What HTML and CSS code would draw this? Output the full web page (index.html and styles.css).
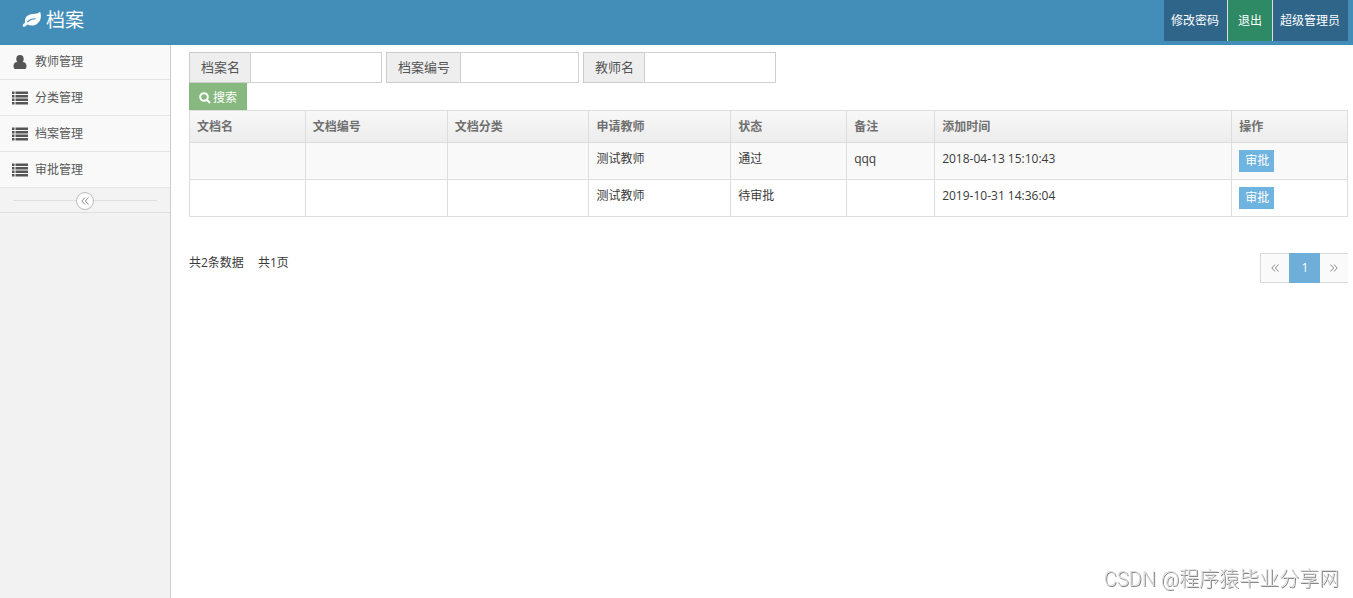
FILE: index.html
```html
<!DOCTYPE html>
<html lang="zh-CN">
<head>
<meta charset="utf-8">
<title>档案</title>
<link rel="stylesheet" href="styles.css">
</head>
<body>
<header class="navbar">
  <a class="brand" href="#">
    <svg class="brand-icon" viewBox="0 0 20 18" aria-hidden="true"><path fill="#fff" fill-rule="evenodd" d="M18.300 1.200C19.500 5 19 9.300 16 12 13 14.900 9 15.200 5.600 13.600 4.200 14.300 3.600 15.800 2.200 15.800 1.200 15.800.5 15 .7 14.200.9 13.200 2.500 12.300 3.100 11.400 2.300 8 4.300 4.800 8 3.600 11.500 2.500 15 3.600 16.900 1.600 17.500.9 18 .600 18.300 1.200ZM6 11.200C8.400 9.200 10.300 8.300 13.300 8.200 14.100 8.200 14.100 7.200 13.300 7.200 9.800 7.300 7.600 8.300 5.200 10.400 4.700 10.900 5.400 11.700 6 11.200Z"/></svg>
    <span>档案</span>
  </a>
  <nav class="user-nav">
    <a class="user-link" href="#">修改密码</a>
    <a class="user-link user-link-exit" href="#">退出</a>
    <a class="user-link" href="#">超级管理员</a>
  </nav>
</header>
<div class="container">
  <aside class="sidebar">
    <nav class="menu">
      <a class="menu-item" href="#"><svg class="menu-icon" viewBox="0 0 16 14" aria-hidden="true"><path d="M8 0a3.700 3.900 0 0 1 3.700 3.900c0 1.300-.4 2.400-1.100 3.100C13.400 7 14.500 8.700 14.500 11.400 14.500 13.100 13.500 14 12.200 14H3.800C2.500 14 1.500 13.100 1.500 11.400 1.500 8.700 2.600 7 5.400 7 4.700 6.300 4.300 5.200 4.300 3.900A3.700 3.900 0 0 1 8 0Z"/></svg>教师管理</a>
      <a class="menu-item" href="#"><svg class="menu-icon" viewBox="0 0 16 14" aria-hidden="true"><path d="M0 .5h2.500V3H0zM3.500.5H16V3H3.500zM0 4h2.500v2.500H0zM3.500 4H16v2.500H3.500zM0 7.500h2.500V10H0zM3.500 7.500H16V10H3.500zM0 11h2.500v2.500H0zM3.500 11H16v2.500H3.500z"/></svg>分类管理</a>
      <a class="menu-item" href="#"><svg class="menu-icon" viewBox="0 0 16 14" aria-hidden="true"><path d="M0 .5h2.500V3H0zM3.500.5H16V3H3.500zM0 4h2.500v2.500H0zM3.500 4H16v2.500H3.500zM0 7.500h2.500V10H0zM3.500 7.500H16V10H3.500zM0 11h2.500v2.500H0zM3.500 11H16v2.500H3.500z"/></svg>档案管理</a>
      <a class="menu-item" href="#"><svg class="menu-icon" viewBox="0 0 16 14" aria-hidden="true"><path d="M0 .5h2.500V3H0zM3.500.5H16V3H3.500zM0 4h2.500v2.500H0zM3.500 4H16v2.500H3.500zM0 7.500h2.500V10H0zM3.500 7.500H16V10H3.500zM0 11h2.500v2.500H0zM3.500 11H16v2.500H3.500z"/></svg>审批管理</a>
    </nav>
    <div class="collapse">
      <button class="collapse-button" type="button" aria-label="收起菜单"><svg class="collapse-icon" viewBox="0 0 8 8" aria-hidden="true"><path d="M4 .5.800 4 4 7.500M7.500.5 4.300 4 7.500 7.500"/></svg></button>
    </div>
  </aside>
  <main class="content">
    <form class="search">
      <div class="fields">
        <div class="field"><label class="field-label" for="doc-name">档案名</label><input class="field-input" id="doc-name" type="text"></div>
        <div class="field"><label class="field-label" for="doc-code">档案编号</label><input class="field-input field-input-narrow" id="doc-code" type="text"></div>
        <div class="field"><label class="field-label" for="teacher">教师名</label><input class="field-input" id="teacher" type="text"></div>
      </div>
      <button class="search-button" type="button"><svg class="search-icon" viewBox="0 0 12 12" aria-hidden="true"><circle cx="5" cy="5" r="3.800"/><path d="M8 8l3 3"/></svg>搜索</button>
    </form>
    <table class="records">
      <colgroup>
        <col class="col-name"><col class="col-wide"><col class="col-wide"><col class="col-wide"><col class="col-name"><col class="col-note"><col class="col-time"><col class="col-name">
      </colgroup>
      <thead>
        <tr><th>文档名</th><th>文档编号</th><th>文档分类</th><th>申请教师</th><th>状态</th><th>备注</th><th>添加时间</th><th>操作</th></tr>
      </thead>
      <tbody>
        <tr><td></td><td></td><td></td><td>测试教师</td><td>通过</td><td>qqq</td><td>2018-04-13 15:10:43</td><td><button class="action" type="button">审批</button></td></tr>
        <tr><td></td><td></td><td></td><td>测试教师</td><td>待审批</td><td></td><td>2019-10-31 14:36:04</td><td><button class="action" type="button">审批</button></td></tr>
      </tbody>
    </table>
    <footer class="summary">
      <div class="totals"><span>共2条数据</span><span>共1页</span></div>
      <nav class="pager">
        <a class="page" href="#" aria-label="上一页"><svg class="page-icon" viewBox="0 0 8 8" aria-hidden="true"><path d="M4 .5.800 4 4 7.500M7.500.5 4.300 4 7.500 7.500"/></svg></a>
        <a class="page page-current" href="#">1</a>
        <a class="page page-last" href="#" aria-label="下一页"><svg class="page-icon" viewBox="0 0 8 8" aria-hidden="true"><path d="M.5.5 3.700 4 .5 7.500M4 .5 7.200 4 4 7.500"/></svg></a>
      </nav>
    </footer>
  </main>
</div>
<div class="watermark">CSDN @程序猿毕业分享网</div>
</body>
</html>
```
FILE: styles.css
```css
* {
  box-sizing: border-box;
}

body {
  margin: 0;
  min-height: 100vh;
  display: flex;
  flex-direction: column;
  background: #fff;
  color: #393939;
  font: 12px/18px "Open Sans", "Noto Sans CJK SC", sans-serif;
}

a {
  color: inherit;
  text-decoration: none;
}

button,
input {
  font: inherit;
  margin: 0;
  border-radius: 0;
}

.navbar {
  display: flex;
  justify-content: space-between;
  align-items: flex-start;
  height: 45px;
  padding: 0 5px 0 22px;
  background: #438eb9;
  color: #fff;
}

.brand {
  display: flex;
  align-items: center;
  gap: 4px;
  height: 39px;
  font-size: 19px;
  line-height: 38px;
}

.brand-icon {
  width: 20px;
  height: 18px;
}

.user-nav {
  display: flex;
}

.user-link {
  padding: 0 8px 0 7px;
  background: #2e6589;
  line-height: 41px;
}

.user-link-exit {
  padding: 0 10px;
  border: solid #ddd;
  border-width: 0 1px;
  background: #2e8965;
}

.container {
  display: flex;
  flex: 1;
}

.sidebar {
  flex: 0 0 171px;
  border-right: 1px solid #ccc;
  background: #f2f2f2;
}

.menu-item {
  display: flex;
  align-items: center;
  gap: 7px;
  height: 36px;
  padding-left: 12px;
  border-bottom: 1px solid #e5e5e5;
  background: #f9f9f9;
  color: #585858;
}

.menu-item:first-child {
  height: 35px;
}

.menu-icon {
  width: 16px;
  height: 14px;
  fill: #555;
}

.collapse {
  display: flex;
  align-items: center;
  height: 25px;
  padding: 1px 13px 0;
  border-bottom: 1px solid #e0e0e0;
  background: #f3f3f3;
}

.collapse::before,
.collapse::after {
  content: "";
  flex: 1;
  height: 1px;
  background: #e0e0e0;
}

.collapse-button {
  display: flex;
  align-items: center;
  justify-content: center;
  width: 18px;
  height: 18px;
  padding: 0;
  border: 1px solid #bbb;
  border-radius: 50%;
  background: #fff;
}

.collapse-icon,
.page-icon {
  width: 8px;
  height: 8px;
  fill: none;
  stroke: #888;
}

.content {
  flex: 1;
  min-width: 0;
  padding: 7px 5px 0 18px;
}

.search {
  display: flex;
  flex-direction: column;
  align-items: flex-start;
}

.fields {
  display: flex;
  gap: 4px;
}

.field {
  display: flex;
  height: 31px;
}

.field-label {
  padding: 0 10px 0 11px;
  border: 1px solid #ccc;
  border-right: 0;
  background: #eee;
  color: #555;
  font-size: 13px;
  line-height: 29px;
}

.field-input {
  width: 132px;
  padding: 0 4px;
  border: 1px solid #d0d0d0;
  background: #fff;
}

.field-input-narrow {
  width: 119px;
}

.search-button {
  display: flex;
  align-items: center;
  gap: 2px;
  height: 27px;
  padding: 3px 10px 0;
  border: 0;
  background: #87b87f;
  color: #fff;
}

.search-icon {
  width: 12px;
  height: 12px;
  fill: none;
  stroke: #fff;
  stroke-width: 2;
}

.records {
  width: 100%;
  table-layout: fixed;
  border-collapse: collapse;
}

.col-name {
  width: 10%;
}

.col-wide {
  width: 12.25%;
}

.col-note {
  width: 7.6%;
}

.records th,
.records td {
  padding: 7px;
  border: 1px solid #ddd;
  text-align: left;
  vertical-align: top;
}

.records th {
  height: 32px;
  padding-bottom: 6px;
  color: #707070;
  font-weight: 700;
}

.records thead tr {
  background: linear-gradient(#f8f8f8, #ececec);
}

.records td {
  height: 37px;
}

.records tbody tr:first-child {
  background: #f9f9f9;
}

.action {
  display: block;
  height: 22px;
  padding: 0 5px 0 6px;
  border: 0;
  background: #6fb3e0;
  color: #fff;
  line-height: 22px;
}

.summary {
  display: flex;
  justify-content: space-between;
  padding-top: 36px;
}

.totals {
  display: flex;
  gap: 14px;
  line-height: 20px;
}

.pager {
  display: flex;
}

.page {
  display: flex;
  align-items: center;
  justify-content: center;
  width: 29px;
  height: 30px;
  border: 1px solid #d9d9d9;
  border-right: 0;
  background: #fafafa;
}

.page-current {
  width: 31px;
  border-color: #6faed9;
  background: #6faed9;
  color: #fff;
}

.page-last {
  width: 28px;
  border-left: 0;
}

.watermark {
  position: fixed;
  right: 14px;
  bottom: 4px;
  color: #ddd;
  font: 300 20px/30px Roboto, "Noto Sans CJK SC", sans-serif;
  text-shadow: 1px 1px 0 #888;
}
```
